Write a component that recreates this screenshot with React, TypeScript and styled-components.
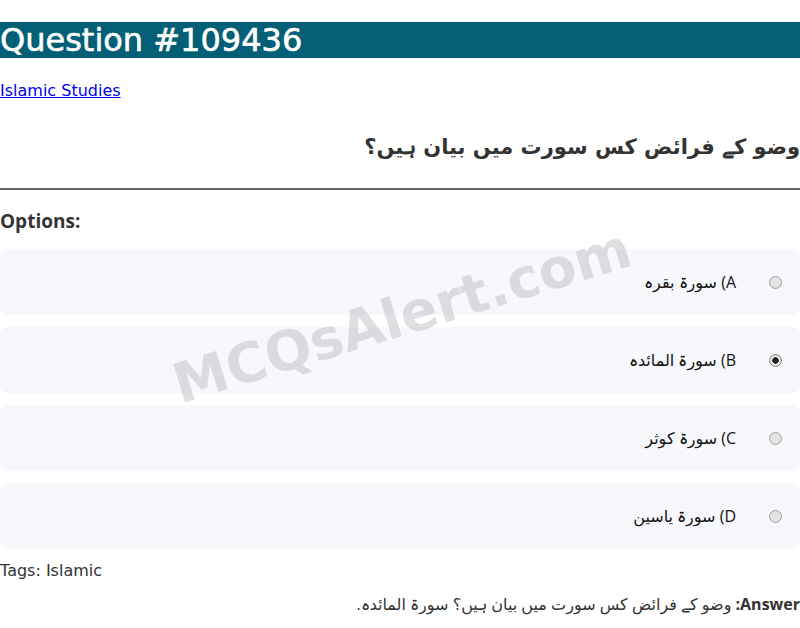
import * as React from 'react';
import styled, { createGlobalStyle } from 'styled-components';

const GlobalStyle = createGlobalStyle`
  body {
    margin: 0;
    background: #ffffff;
    font-family: "DejaVu Sans", sans-serif;
    color: #333333;
  }
`;

const options = [
  { key: 'A', text: 'سورۃ بقرہ', checked: false },
  { key: 'B', text: 'سورۃ المائدہ', checked: true },
  { key: 'C', text: 'سورۃ كوثر', checked: false },
  { key: 'D', text: 'سورۃ ياسين', checked: false },
];

const App = () => (
  <>
    <GlobalStyle />
    <Page>
      <Heading>Question #109436</Heading>
      <CategoryLine>
        <CategoryLink href="#">Islamic Studies</CategoryLink>
      </CategoryLine>
      <QuestionText dir="rtl">وضو كے فرائض كس سورت ميں بيان ہيں؟</QuestionText>
      <Divider />
      <OptionsTitle>Options:</OptionsTitle>
      <OptionList>
        {options.map((o) => (
          <OptionRow key={o.key} dir="rtl">
            <Radio type="radio" name="opt" checked={o.checked} disabled readOnly />
            <OptionLabel>{`${o.key}) ${o.text}`}</OptionLabel>
          </OptionRow>
        ))}
      </OptionList>
      <Tags>Tags: Islamic</Tags>
      <Answer dir="rtl">
        <strong>Answer:</strong> وضو كے فرائض كس سورت ميں بيان ہيں؟ سورۃ المائدہ.
      </Answer>
      <Watermark>MCQsAlert.com</Watermark>
    </Page>
  </>
);

const Page = styled.div`
  position: relative;
  width: 800px;
  overflow: hidden;
`;

const Heading = styled.h1`
  margin: 22px 0 0;
  background: #035f75;
  color: #ffffff;
  font-family: "DejaVu Sans", sans-serif;
  font-size: 32px;
  font-weight: normal;
  line-height: 36px;
  -webkit-text-stroke: 0.6px #ffffff;
`;

const CategoryLine = styled.p`
  margin: 23px 0 0;
  font-size: 16px;
  line-height: 20px;
`;

const CategoryLink = styled.a`
  color: #0000ee;
  text-decoration: underline;
`;

const QuestionText = styled.h2`
  margin: 31px 0 0;
  font-family: "DejaVu Sans", sans-serif;
  font-size: 21px;
  font-weight: bold;
  line-height: 30px;
  color: #333333;
  text-align: right;
`;

const Divider = styled.hr`
  margin: 26px 0 0;
  border: none;
  border-top: 2px solid #666666;
`;

const OptionsTitle = styled.h3`
  margin: 18px 0 0;
  font-family: "Open Sans", sans-serif;
  font-size: 19px;
  font-weight: 700;
  line-height: 26px;
  color: #333333;
`;

const OptionList = styled.div`
  display: flex;
  flex-direction: column;
  gap: 12px;
  margin-top: 15px;
`;

const OptionRow = styled.label`
  display: flex;
  align-items: center;
  height: 66px;
  padding: 0 18px;
  background: #f7f8fc;
  border-radius: 8px;
  box-sizing: border-box;
`;

const Radio = styled.input`
  appearance: none;
  width: 13px;
  height: 13px;
  margin: 0 0 0 33px;
  border: 1px solid #a0a0a0;
  border-radius: 50%;
  background: #e4e4e4;
  box-sizing: border-box;
  flex-shrink: 0;

  &:checked {
    background: radial-gradient(circle, #222222 0 3px, #ffffff 3.5px 4px, #d8d8d8 4.5px);
    border-color: #888888;
  }
`;

const OptionLabel = styled.span`
  font-family: "Open Sans", "DejaVu Sans", sans-serif;
  font-size: 16px;
  color: #111111;
`;

const Tags = styled.p`
  margin: 12px 0 0;
  font-size: 16px;
  line-height: 20px;
  color: #333333;
`;

const Answer = styled.p`
  margin: 12px 0 0;
  font-family: "Open Sans", "DejaVu Sans", sans-serif;
  font-size: 16px;
  line-height: 22px;
  color: #333333;

  strong {
    font-weight: 700;
  }
`;

const Watermark = styled.div`
  position: absolute;
  left: 402px;
  top: 316px;
  transform: translate(-50%, -50%) rotate(-17deg);
  font-family: "DejaVu Sans", sans-serif;
  font-size: 55px;
  font-weight: bold;
  color: rgba(140, 142, 150, 0.27);
  white-space: nowrap;
  pointer-events: none;
`;

export default App;
